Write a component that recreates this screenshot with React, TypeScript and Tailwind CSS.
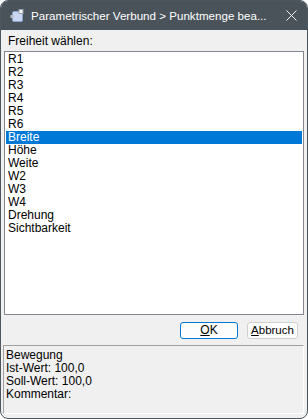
const items = [
  "R1",
  "R2",
  "R3",
  "R4",
  "R5",
  "R6",
  "Breite",
  "Höhe",
  "Weite",
  "W2",
  "W3",
  "W4",
  "Drehung",
  "Sichtbarkeit",
];

function AppIcon() {
  return (
    <svg width="14" height="14" viewBox="0 0 14 14">
      <rect x="2.5" y="2.5" width="10" height="10" rx="1.5" fill="#c9d7f2" stroke="#8ba2cf" />
      <rect x="9" y="0.5" width="4" height="4" fill="#f4f4f4" stroke="#9aa3ad" />
      <rect x="0.5" y="6" width="3" height="3" fill="#b7bcc2" />
    </svg>
  );
}

export default function App() {
  return (
    <div
      className="w-[308px] h-[419px] bg-white"
      style={{ fontFamily: '"Liberation Sans", Arial, sans-serif' }}
    >
      <div className="w-full h-full flex flex-col rounded-[8px] overflow-hidden border border-[#4f575e] bg-[#f0f0f0]">
        {/* title bar */}
        <div className="h-[29px] shrink-0 bg-[#4a535a] flex items-center pl-[9px] pr-[9px]">
          <AppIcon />
          <span className="ml-[7px] text-[11.6px] text-white whitespace-nowrap flex-1">
            Parametrischer Verbund &gt; Punktmenge bea...
          </span>
          <svg width="11" height="11" viewBox="0 0 11 11" className="mr-[1px]">
            <path d="M0.5 0.5 L10.5 10.5 M10.5 0.5 L0.5 10.5" stroke="#f2f2f2" strokeWidth="1" />
          </svg>
        </div>

        {/* body */}
        <div className="flex-1 flex flex-col text-[12px] leading-[13px] text-black">
          <div className="pt-[5px] pl-[7px] h-[21px]">Freiheit wählen:</div>
          <div className="mx-[3px] h-[264px] border border-[#828790] bg-white p-[1px]">
            {items.map((it) => (
              <div
                key={it}
                className={
                  it === "Breite"
                    ? "h-[13px] pl-[2px] bg-[#0078d7] text-white"
                    : "h-[13px] pl-[2px]"
                }
              >
                {it}
              </div>
            ))}
          </div>

          <div className="flex justify-end gap-[9px] pr-[9px] mt-[7px]">
            <button className="w-[58px] h-[17px] rounded-[3px] border border-[#0078d4] bg-[#fdfdfd] text-[12px] leading-[13px]">
              <span className="underline">O</span>K
            </button>
            <button className="w-[51px] h-[17px] rounded-[3px] border border-[#d0d0d0] bg-[#fdfdfd] text-[11.5px] leading-[13px]">
              <span className="underline">A</span>bbruch
            </button>
          </div>

          <div className="mt-[6px] ml-[2px] mr-[3px] h-[69px] border-t border-l border-[#a0a0a0] border-b border-r border-b-white border-r-white pt-[3px] pl-[2px]">
            <div>Bewegung</div>
            <div>Ist-Wert: 100,0</div>
            <div>Soll-Wert: 100,0</div>
            <div>Kommentar:</div>
          </div>
        </div>
      </div>
    </div>
  );
}
